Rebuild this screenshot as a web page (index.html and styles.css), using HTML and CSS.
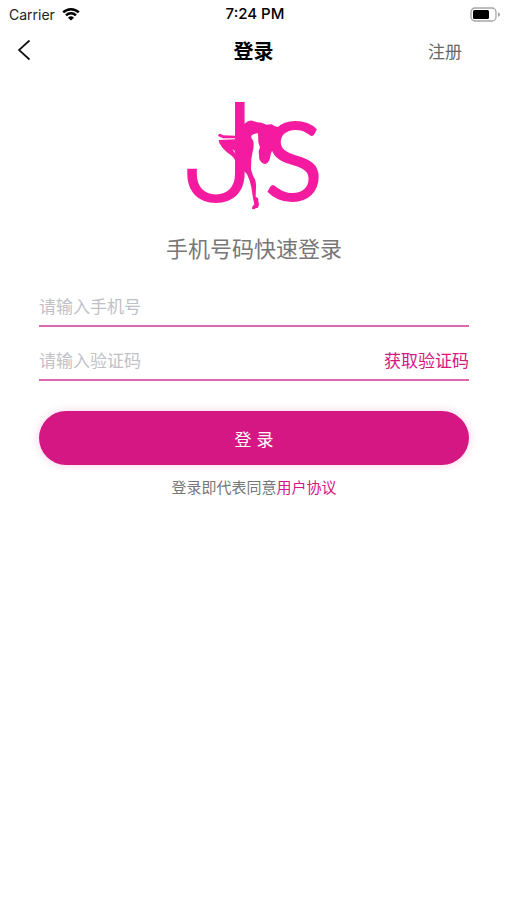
FILE: index.html
```html
<!DOCTYPE html>
<html lang="zh-CN">
<head>
<meta charset="utf-8">
<meta name="viewport" content="width=device-width, initial-scale=1">
<title>登录</title>
<link rel="stylesheet" href="styles.css">
</head>
<body>
<div class="status">
  <div class="status-left">
    <span>Carrier</span>
    <svg class="wifi" viewBox="0 0 18 14" aria-hidden="true">
      <path d="M1.2 5.400a11.2 11.2 0 0 1 15.6 0M4 8.3a7.2 7.2 0 0 1 10 0" fill="none" stroke="#000" stroke-width="2.5"/>
      <path d="M9 13.6 6 10.7a4.4 4.4 0 0 1 6 0z"/>
    </svg>
  </div>
  <time class="clock">7:24 PM</time>
  <div class="status-right">
    <svg class="battery" viewBox="0 0 31 15" aria-hidden="true">
      <rect x="1" y="1" width="25" height="13" rx="4" fill="#fff" stroke="#a6a6a6" stroke-width="1.3"/>
      <rect x="3" y="3" width="16" height="9" rx="1.5"/>
      <path d="M28 5.2c2.7.8 2.7 3.8 0 4.600z" fill="#a6a6a6"/>
    </svg>
  </div>
</div>
<header class="nav">
  <button class="back" type="button" aria-label="返回">
    <svg viewBox="0 0 14 22" aria-hidden="true"><path d="M12.5 1.5 2 11l10.500 9.500" fill="none" stroke="#111" stroke-width="1.7"/></svg>
  </button>
  <h1>登录</h1>
  <a class="register" href="#register">注册</a>
</header>
<main>
  <svg class="logo" viewBox="0 0 450 390" role="img" aria-label="JS">
    <text class="logo-j" x="234" y="335" text-anchor="end">J</text>
    <text class="logo-s" x="254" y="332">S</text>
    <path d="M117 138Q118 131 124 131L132 136L170 137V145L132 145Q123 141 117 138Z"/>
    <path d="M119 150L170 148V216Q166 204 159 198L143 186Q129 174 121 159Z"/>
    <path d="M190 108L198 100Q210 89 220 92L234 97L248 98L262 104L278 103L288 109L302 112L304 150Q296 178 288 177L283 174L276 190L272 208Q268 220 258 222Q247 220 241 207L239 184L243 172L238 157L237 130Q224 130 217 137L217 144L223 153Q226 173 220 190L217 207L216 238L222 257Q233 272 231 292L230 320L237 325L240 345L236 354L230 354L227 358L219 357L220 350L226 343L222 324L217 292Q213 270 204 253L196 244L180 270L170 210Z"/>
    <path d="M160 177L167 183V190Z" fill="#fff"/>
  </svg>
  <h2>手机号码快速登录</h2>
  <form>
    <div class="field">
      <input type="tel" aria-label="手机号" placeholder="请输入手机号">
    </div>
    <div class="field">
      <input type="text" inputmode="numeric" aria-label="验证码" placeholder="请输入验证码">
      <button class="code" type="button">获取验证码</button>
    </div>
    <button class="submit" type="submit">登 录</button>
  </form>
  <p class="terms">登录即代表同意<a href="#terms">用户协议</a></p>
</main>
</body>
</html>
```
FILE: styles.css
```css
* {
  box-sizing: border-box;
}

body {
  margin: 0;
  background: #fff;
  color: #000;
  font-family: Inter, "Noto Sans CJK SC", sans-serif;
}

button,
input {
  padding: 0;
  border: 0;
  background: none;
  font: inherit;
}

a {
  text-decoration: none;
}

.status {
  display: grid;
  grid-template-columns: 1fr auto 1fr;
  align-items: center;
  height: 28px;
  padding: 0 6px 0 9px;
  font-size: 14px;
}

.status-left {
  display: flex;
  align-items: center;
  gap: 7px;
  color: #222;
}

.wifi {
  width: 18px;
  height: 14px;
}

.clock {
  font-size: 15px;
  line-height: 18px;
  font-weight: 500;
}

.status-right {
  display: flex;
  justify-content: flex-end;
}

.battery {
  width: 31px;
  height: 15px;
}

.nav {
  display: grid;
  grid-template-columns: 1fr auto 1fr;
  align-items: center;
  height: 48px;
  padding: 0 45px 0 17px;
}

.nav h1 {
  grid-column: 2;
  margin: 0 0 0 28px;
  font-size: 20px;
  line-height: 24px;
  font-weight: 700;
}

.back {
  width: 14px;
  height: 22px;
  margin-bottom: 4px;
}

.back svg {
  display: block;
}

.register {
  justify-self: end;
  color: #666;
  font-size: 17px;
  line-height: 24px;
}

main {
  padding: 14px 38px 0 39px;
}

.logo {
  display: block;
  width: 150px;
  height: 130px;
  margin: 0 auto;
  overflow: visible;
  fill: #f41ba0;
}

.logo-j {
  font-family: Inter, sans-serif;
  font-size: 412px;
  font-weight: 300;
}

.logo-s {
  font-family: Lato, sans-serif;
  font-size: 331px;
}

h2 {
  margin: 13px 0 8px;
  color: #777;
  font-size: 22px;
  line-height: 32px;
  font-weight: 400;
  text-align: center;
}

.field {
  display: flex;
  align-items: center;
  height: 54px;
  padding-top: 12px;
  border-bottom: 2px solid #dd68ad;
}

.field input {
  flex: 1;
  min-width: 0;
  height: 40px;
  padding-top: 3px;
  outline: 0;
  font-size: 17px;
}

.field input::placeholder {
  color: #bfc1c7;
  opacity: 1;
}

.code {
  color: #d51784;
  font-size: 17px;
}

.submit {
  display: block;
  width: 100%;
  height: 54px;
  margin-top: 30px;
  border-radius: 27px;
  background: #d51784;
  box-shadow: 0 0 10px rgba(213, 23, 132, 0.2);
  color: #fff;
  font-size: 17px;
}

.terms {
  margin: 12px 0 0;
  color: #777;
  font-size: 15px;
  line-height: 22px;
  text-align: center;
}

.terms a {
  color: #d51784;
}
```
